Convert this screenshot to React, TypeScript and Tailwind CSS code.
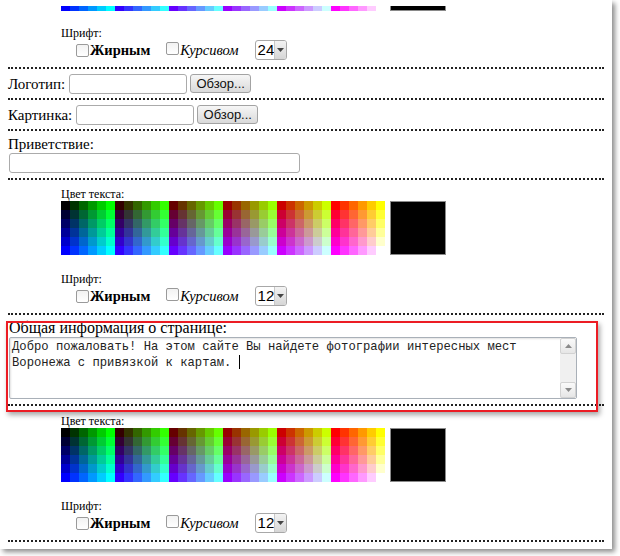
const levels = [0, 51, 102, 153, 204, 255];

function Sep() {
  return <div className="h-0 border-t-2 border-dotted border-[#222]" />;
}

function Checkbox() {
  return (
    <span className="inline-block w-[13px] h-[13px] border border-[#9a9a9a] rounded-[2px] bg-gradient-to-b from-[#f2f2f2] to-white" />
  );
}

function SizeSelect({ value }: { value: string }) {
  return (
    <div className="flex w-[32px] h-[20px] border border-[#a8a8a8] rounded-[3px] bg-white overflow-hidden">
      <span className="flex-1 pl-[2px] font-['Liberation_Sans',Arial,sans-serif] text-[15px] leading-[18px] text-black">
        {value}
      </span>
      <span className="w-[13px] flex items-center justify-center bg-gradient-to-b from-[#f3f3f3] to-[#d6d6d6] border-l border-[#c8c8c8]">
        <svg width="7" height="4" viewBox="0 0 7 4">
          <path d="M0 0h7L3.5 4z" fill="#444" />
        </svg>
      </span>
    </div>
  );
}

function Palette() {
  const cells: { key: string; color: string }[] = [];
  for (let b = 0; b < 6; b++) {
    for (let r = 0; r < 6; r++) {
      for (let g = 0; g < 6; g++) {
        cells.push({
          key: `${r}-${g}-${b}`,
          color: `rgb(${levels[r]}, ${levels[g]}, ${levels[b]})`,
        });
      }
    }
  }
  return (
    <div className="grid grid-cols-[repeat(36,9px)] grid-rows-[repeat(6,9px)]">
      {cells.map((c) => (
        <span key={c.key} style={{ backgroundColor: c.color }} />
      ))}
    </div>
  );
}

function ColorSection({
  size,
  top = 'pt-[7px]',
  gap = 'mt-[18px]',
  showLabel = true,
}: {
  size: string;
  top?: string;
  gap?: string;
  showLabel?: boolean;
}) {
  return (
    <div className={`${top} pb-[7px]`}>
      <div className="ml-[53px] text-[12px] leading-[14px] h-[14px]">{showLabel && 'Цвет текста:'}</div>
      <div className="ml-[53px] flex gap-[5px]">
        <Palette />
        <div className="w-[56px] h-[54px] bg-black border border-[#8a8a8a]" />
      </div>
      <div className={`ml-[53px] ${gap} text-[12px] leading-[13px] h-[13px]`}>Шрифт:</div>
      <div className="ml-[68px] h-[20px] flex items-center">
        <Checkbox />
        <span className="ml-[1px] font-bold text-[14.5px] leading-[18px]">Жирным</span>
        <span className="ml-[16px]">
          <Checkbox />
        </span>
        <span className="ml-[1px] italic text-[14.5px] leading-[18px]">Курсивом</span>
        <span className="ml-[16px]">
          <SizeSelect value={size} />
        </span>
      </div>
    </div>
  );
}

function FileRow({ label }: { label: string }) {
  return (
    <div className="h-[29px] flex items-center text-[15px]">
      <span className="leading-[18px]">{label}</span>
      <span className="ml-[4px] w-[118px] h-[20px] border border-[#ababab] rounded-[3px] bg-white" />
      <button className="ml-[3px] w-[61px] h-[19px] border border-[#a3a3a3] rounded-[3px] bg-gradient-to-b from-[#f6f6f6] to-[#dadada] font-['Liberation_Sans',Arial,sans-serif] text-[13px] leading-[17px] text-[#111]">
        Обзор...
      </button>
    </div>
  );
}

function ScrollArrow({ up }: { up?: boolean }) {
  return (
    <span className="w-[16px] h-[16px] flex items-center justify-center bg-gradient-to-b from-[#fafafa] to-[#e6e6e6] border border-[#d2d2d2] rounded-[2px]">
      <svg width="7" height="4" viewBox="0 0 7 4">
        <path d={up ? 'M0 4h7L3.5 0z' : 'M0 0h7L3.5 4z'} fill="#8a8a8a" />
      </svg>
    </span>
  );
}

export default function App() {
  return (
    <div className="w-[620px] h-[556px] overflow-hidden bg-white font-['Liberation_Serif','Times_New_Roman',serif] text-black">
      <div className="w-[612px] h-[549px] pt-[6px] bg-white shadow-[3px_3px_5px_rgba(0,0,0,0.45)]">
        <div className="h-[543px] overflow-hidden">
          <div className="-mt-[70px] px-[8px]">
            {/* section scrolled past the top edge */}
            <ColorSection size="24" gap="mt-[16px]" showLabel={false} />
            <Sep />
            <FileRow label="Логотип:" />
            <Sep />
            <FileRow label="Картинка:" />
            <Sep />

            {/* Приветствие */}
            <div className="pt-[4px] pb-[5px]">
              <div className="text-[15px] leading-[18px] h-[18px]">Приветствие:</div>
              <div className="ml-[1px] w-[291px] h-[20px] border border-[#ababab] rounded-[3px] bg-white" />
            </div>
            <Sep />

            <ColorSection size="12" />
            <Sep />

            {/* Общая информация */}
            <div className="relative">
              <div className="pt-[4px] pb-[5px]">
                <div className="ml-[1px] text-[16px] leading-[18px] h-[18px]">Общая информация о странице:</div>
                <div className="ml-[1px] flex w-[568px] h-[62px] border border-[#a9b0b8] rounded-[2px] bg-white shadow-[inset_1px_1px_2px_rgba(0,0,0,0.12)]">
                  <div className="flex-1 pl-[2px] pt-[2px] font-['Liberation_Mono','Courier_New',monospace] text-[12.2px] leading-[15px] text-[#222] whitespace-pre">
                    {'Добро пожаловать! На этом сайте Вы найдете фотографии интересных мест\nВоронежа с привязкой к картам. '}
                    <span className="inline-block w-px h-[14px] align-[-3px] bg-black" />
                  </div>
                  <div className="w-[16px] flex flex-col justify-between bg-[#f0f0f0]">
                    <ScrollArrow up />
                    <ScrollArrow />
                  </div>
                </div>
              </div>
              <Sep />
              <div className="absolute left-[-2px] right-[6px] top-[6px] bottom-[-6px] border-2 border-[#ec1c24] shadow-[2px_3px_5px_rgba(0,0,0,0.35)] pointer-events-none" />
            </div>

            <ColorSection size="12" top="pt-[8px]" />
            <Sep />
          </div>
        </div>
      </div>
    </div>
  );
}
